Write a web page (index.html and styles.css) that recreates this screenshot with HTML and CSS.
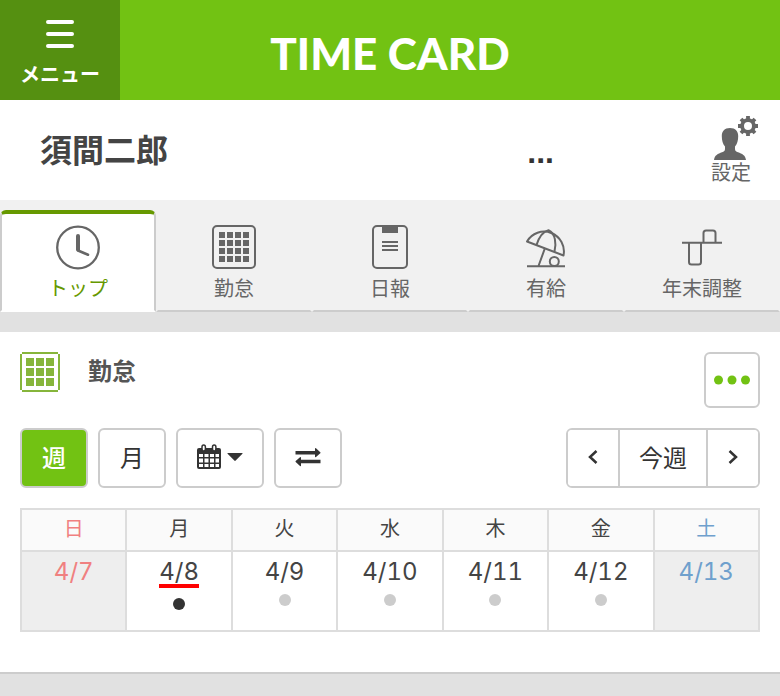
FILE: index.html
```html
<!DOCTYPE html>
<html lang="ja">
<head>
  <meta charset="UTF-8">
  <meta name="viewport" content="width=device-width, initial-scale=1">
  <title>TIME CARD</title>
  <link rel="stylesheet" href="styles.css">
</head>
<body>
  <header class="header">
    <button class="menu-button" type="button">
      <svg width="28" height="28" viewBox="0 0 28 28" fill="none" stroke="#fff" stroke-width="4" stroke-linecap="round">
        <path d="M2 2h24M2 14h24M2 26h24"/>
      </svg>
      <span>メニュー</span>
    </button>
    <h1 class="logo">TIME CARD</h1>
  </header>

  <section class="user">
    <p class="user-name"><span>須間二郎</span><span class="user-more">...</span></p>
    <a class="settings" href="#settings">
      <svg width="54" height="44" viewBox="0 0 54 44" fill="#666">
        <path d="M26 12c-5.500 0-8.200 3.500-8.200 8 0 4.500 1 8 3.200 10.500V33c0 2-1 2.500-3 3.200-4 1.500-7.500 3-8 7.800h32c-.5-4.800-4-6.300-8-7.800-2-.7-3-1.200-3-3.200v-2.500c2.200-2.500 3.200-6 3.200-10.500 0-4.500-2.700-8-8.200-8z"/>
        <g fill="none" stroke="#666">
          <circle cx="44" cy="10" r="5.900" stroke-width="3.800"/>
          <path stroke-width="3.800" d="M44 0v4M44 16v4M34 10h4M50 10h4M37 3l2.600 2.600M48.400 14.400L51 17M37 17l2.600-2.600M48.400 5.600L51 3"/>
        </g>
      </svg>
      <span>設定</span>
    </a>
  </section>

  <nav class="tabs">
    <a class="tab active" href="#top">
      <svg width="44" height="44" viewBox="0 0 44 44" fill="none" stroke="#666" stroke-width="2">
        <circle cx="22" cy="22.500" r="20.800" stroke-width="2.300"/>
        <path d="M22 11V24.500" stroke-width="4" stroke-linecap="round"/>
        <path d="M22 25.500l10 4.200" stroke-width="2.600" stroke-linecap="round"/>
      </svg>
      <span>トップ</span>
    </a>
    <a class="tab" href="#attendance">
      <svg width="44" height="44" viewBox="0 0 44 44" fill="none" stroke="#666" stroke-width="2">
        <rect x="1" y="1" width="42" height="42" rx="4"/>
        <path stroke-width="6" stroke-dasharray="6 2" d="M7 10h30M7 18h30M7 26h30M7 34h30"/>
      </svg>
      <span>勤怠</span>
    </a>
    <a class="tab" href="#report">
      <svg width="44" height="44" viewBox="0 0 44 44" fill="none" stroke="#666" stroke-width="2">
        <rect x="5" y="1" width="34" height="42" rx="4"/>
        <path d="M14 1h16v7H14z" fill="#666" stroke="none"/>
        <path d="M14 17h16M14 21h16M14 25h16"/>
      </svg>
      <span>日報</span>
    </a>
    <a class="tab" href="#leave">
      <svg width="44" height="44" viewBox="0 0 44 44" fill="none" stroke="#666" stroke-width="2" stroke-linejoin="round">
        <path d="M3 16.500A19.800 19.800 0 0 1 39.500 30.500z"/>
        <path d="M12.500 20C15 12 19 6.500 24.500 5.200C31.500 8 32.500 19 30.500 26.500"/>
        <path d="M21 23l-6.500 18M3 41.300h38"/>
        <circle cx="30.300" cy="36.500" r="4.500"/>
      </svg>
      <span>有給</span>
    </a>
    <a class="tab" href="#year-end">
      <svg width="44" height="44" viewBox="0 0 44 44" fill="none" stroke="#666" stroke-width="2">
        <path d="M2 17.700h40M23.500 17.700V8q0-2.500 2.500-2.500h7q2.500 0 2.500 2.500v9.700M9 17.700V37q0 2.500 2.500 2.500h7q2.500 0 2.500-2.500V17.700"/>
      </svg>
      <span>年末調整</span>
    </a>
  </nav>

  <main class="panel">
    <div class="panel-head">
      <svg width="40" height="40" viewBox="0 0 40 40" fill="none" stroke="#86b53b" stroke-width="2">
        <path d="M2 1h36M2 39h36M1 2v36M39 2v36"/>
        <path stroke-width="8" stroke-dasharray="8 2" d="M6 10h28M6 20h28M6 30h28"/>
      </svg>
      <h2>勤怠</h2>
      <button class="button more" type="button" aria-label="その他">
        <svg width="36" height="10" viewBox="0 0 36 10" fill="#72c213">
          <circle cx="4.500" cy="5" r="4.500"/>
          <circle cx="18" cy="5" r="4.500"/>
          <circle cx="31.500" cy="5" r="4.500"/>
        </svg>
      </button>
    </div>

    <div class="toolbar">
      <button class="button selected" type="button">週</button>
      <button class="button" type="button">月</button>
      <button class="button calendar" type="button" aria-label="カレンダー">
        <svg width="24" height="26" viewBox="0 0 24 26">
          <path fill="#333" d="M2 4h20q2 0 2 2v17q0 2-2 2H2q-2 0-2-2V6q0-2 2-2z"/>
          <path fill="#fff" d="M2 10h4v3H2zM7.500 10h4v3h-4zM13 10h4v3h-4zM18.500 10h3.500v3h-3.500zM2 14.500h4v4H2zM7.500 14.500h4v4h-4zM13 14.500h4v4h-4zM18.500 14.500h3.500v4h-3.500zM2 20h4v3H2zM7.500 20h4v3h-4zM13 20h4v3h-4zM18.500 20h3.500v3h-3.500z"/>
          <path fill="#fff" stroke="#333" stroke-width="1.500" d="M5 3q0-2 1.700-2t1.700 2v2q0 2-1.700 2T5 5zM15.500 3q0-2 1.700-2t1.700 2v2q0 2-1.700 2t-1.700-2z"/>
        </svg>
        <svg width="16" height="8" viewBox="0 0 16 8" fill="#333">
          <path d="M1 0h14q1 0 .4.800L8.700 7.600q-.7.600-1.400 0L.6.800Q0 0 1 0z"/>
        </svg>
      </button>
      <button class="button" type="button" aria-label="切り替え">
        <svg width="26" height="20" viewBox="0 0 26 20" fill="#333">
          <path d="M.5 4H20V1.500q.3-.7 1-.2l4.300 3.900q.5.500 0 1L21 10q-.7.500-1-.2V7.400H.5zM25.500 12.800H6v-2.300q-.3-.7-1-.2L.7 14.100q-.5.500 0 1L5 19q.7.500 1-.2v-2.600h19.500z"/>
        </svg>
      </button>
      <div class="pager">
        <button type="button" aria-label="前の週">
          <svg width="10" height="14" viewBox="0 0 10 14" fill="none" stroke="#333" stroke-width="2.500"><path d="M8.500 1L2 7l6.500 6"/></svg>
        </button>
        <button class="this-week" type="button">今週</button>
        <button type="button" aria-label="次の週">
          <svg width="10" height="14" viewBox="0 0 10 14" fill="none" stroke="#333" stroke-width="2.500"><path d="M1.500 1L8 7l-6.500 6"/></svg>
        </button>
      </div>
    </div>

    <table class="week">
      <thead>
        <tr>
          <th class="sun">日</th>
          <th>月</th>
          <th>火</th>
          <th>水</th>
          <th>木</th>
          <th>金</th>
          <th class="sat">土</th>
        </tr>
      </thead>
      <tbody>
        <tr>
          <td class="sun">4/7</td>
          <td class="today"><span class="date">4/8</span><i class="dot"></i></td>
          <td><span class="date">4/9</span><i class="dot"></i></td>
          <td><span class="date">4/10</span><i class="dot"></i></td>
          <td><span class="date">4/11</span><i class="dot"></i></td>
          <td><span class="date">4/12</span><i class="dot"></i></td>
          <td class="sat">4/13</td>
        </tr>
      </tbody>
    </table>
  </main>
</body>
</html>
```

FILE: styles.css
```css
* { box-sizing: border-box; }
body {
  margin: 0;
  background: #e1e1e1;
  color: #444;
  font-family: "Noto Sans CJK JP", sans-serif;
  font-size: 20px;
  line-height: 24px;
}
a { text-decoration: none; }
button {
  font: inherit;
  padding: 0;
  cursor: pointer;
}
svg { display: block; flex: none; }

.header {
  display: grid;
  grid-template-columns: 120px 1fr 120px;
  height: 100px;
  background: #72c213;
  color: #fff;
}
.menu-button {
  display: flex;
  flex-direction: column;
  align-items: center;
  gap: 14px;
  padding-top: 20px;
  border: none;
  background: #559011;
  color: #fff;
  font-weight: bold;
}
.logo {
  margin: 0;
  padding-top: 6px;
  align-self: center;
  text-align: center;
  font-family: Lato, sans-serif;
  font-size: 44px;
  font-weight: 900;
  line-height: 48px;
}

.user {
  display: flex;
  justify-content: space-between;
  height: 100px;
  padding: 16px 22px 0 40px;
  background: #fff;
}
.user-name {
  display: flex;
  justify-content: space-between;
  width: 72%;
  margin: 0;
  padding-top: 8px;
  font-size: 32px;
  font-weight: bold;
  line-height: 48px;
}
.user-more {
  padding: 4px 3px 0 0;
  color: #333;
  font-family: "Liberation Sans", sans-serif;
}
.settings {
  display: flex;
  flex-direction: column;
  align-items: center;
  color: #666;
}

.tabs {
  display: grid;
  grid-template-columns: repeat(5, 1fr);
  padding-top: 10px;
  background: #f1f1f1;
}
.tab {
  display: flex;
  flex-direction: column;
  align-items: center;
  gap: 7px;
  height: 102px;
  padding-top: 11px;
  border: 2px solid transparent;
  border-top-width: 4px;
  border-bottom-color: #ccc;
  color: #666;
}
.tab svg { overflow: visible; }
.tab.active {
  border-color: #690 #ccc #fff;
  border-radius: 6px 6px 0 0;
  background: #fff;
  color: #690;
}

.panel {
  margin: 20px 0;
  padding: 20px 20px 40px;
  border-bottom: 2px solid #ccc;
  background: #fff;
}
.panel-head {
  display: flex;
  gap: 28px;
}
.panel-head h2 {
  margin: 0;
  color: #555;
  font-size: 24px;
  line-height: 36px;
}
.button {
  display: flex;
  align-items: center;
  justify-content: center;
  width: 68px;
  height: 60px;
  border: 2px solid #ccc;
  border-radius: 6px;
  background: #fff;
  color: #333;
}
.button.more {
  width: 56px;
  height: 56px;
  margin-left: auto;
}
.toolbar {
  display: flex;
  gap: 10px;
  margin: 20px 0;
  font-size: 24px;
}
.toolbar button { padding-bottom: 2px; }
.button.selected {
  background: #72c213;
  color: #fff;
  font-weight: 500;
}
.button.calendar {
  width: 88px;
  gap: 6px;
}
.pager {
  display: flex;
  margin-left: auto;
  border: 2px solid #ccc;
  border-radius: 6px;
  overflow: hidden;
}
.pager button {
  display: flex;
  align-items: center;
  justify-content: center;
  width: 50px;
  border: none;
  background: #fff;
  color: #333;
}
.pager .this-week {
  width: 90px;
  border: solid #ccc;
  border-width: 0 2px;
}

.week {
  width: 100%;
  border-collapse: collapse;
  table-layout: fixed;
  text-align: center;
}
.week th,
.week td {
  padding: 0;
  border: 2px solid #ddd;
}
.week th {
  height: 42px;
  padding-bottom: 4px;
  background: #fafafa;
  font-weight: normal;
}
.week td {
  height: 80px;
  padding-top: 8px;
  vertical-align: top;
  font-family: Inter, sans-serif;
  font-size: 24px;
  font-variant-numeric: tabular-nums;
}
.week .sun { color: #f08080; }
.week .sat { color: #6fa0cd; }
.week td.sun,
.week td.sat { background: #eee; }
.date { display: inline-block; }
.today .date { border-bottom: 4px solid #f00; }
.dot {
  display: block;
  width: 12px;
  height: 12px;
  margin: 10px auto 0;
  border-radius: 50%;
  background: #ccc;
}
.today .dot { background: #333; }
```
